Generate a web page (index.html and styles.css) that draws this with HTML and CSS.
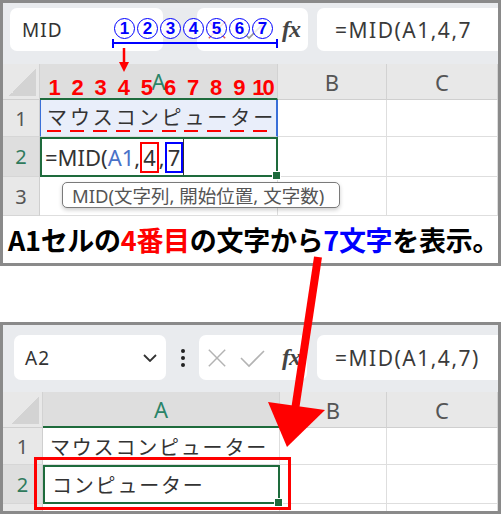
FILE: index.html
```html
<!DOCTYPE html>
<html lang="ja">
<head>
    <meta charset="UTF-8">
    <meta name="viewport" content="width=device-width, initial-scale=1.0">
    <title>MID関数の使い方</title>
    <link rel="stylesheet" href="styles.css">
</head>
<body>
<div class="demo">
    <!-- before: typing the formula -->
    <section class="panel panel-top">
        <div class="toolbar">
            <div class="box namebox">MID</div>
            <div class="bar-gap"></div>
            <div class="box fxbox">
                <svg class="icon-x" width="20" height="20" viewBox="0 0 22 22"><path d="M2 2l18 18M20 2L2 20" stroke="#e06060" stroke-width="1.6"/></svg>
                <svg class="icon-ok" width="26" height="22" viewBox="0 0 26 22"><path d="M2 11l8 8L25 4" stroke="#9a9a9a" stroke-width="1.6" fill="none"/></svg>
                <span class="fx">fx</span>
            </div>
            <div class="box formula">=MID(A1,4,7</div>
        </div>

        <div class="grid">
            <div class="hd corner"></div>
            <div class="hd hd-sel">A</div>
            <div class="hd">B</div>
            <div class="hd">C</div>

            <div class="rh">1</div>
            <div class="cell ref-cell">
                <span class="ch">マ</span><span class="ch">ウ</span><span class="ch">ス</span><span class="ch">コ</span><span class="ch">ン</span><span class="ch">ピ</span><span class="ch">ュ</span><span class="ch">ー</span><span class="ch">タ</span><span class="ch">ー</span>
            </div>
            <div class="cell"></div>
            <div class="cell"></div>

            <div class="rh rh-sel">2</div>
            <div class="cell edit-cell">=MID(<span class="ref">A1</span>,<span class="tag tag-red">4</span>,<span class="tag tag-blue">7</span><span class="caret"></span></div>
            <div class="cell"></div>
            <div class="cell"></div>

            <div class="rh">3</div>
            <div class="cell"></div>
            <div class="cell"></div>
            <div class="cell"></div>
        </div>

        <p class="caption">A1セルの<span class="red">4番目</span>の文字から<span class="blue">7文字</span>を表示。</p>

        <div class="ruler">
            <span>1</span><span>2</span><span>3</span><span>4</span><span>5</span><span>6</span><span>7</span><span>8</span><span>9</span><span class="two">10</span>
        </div>
        <div class="circled">
            <span>1</span><span>2</span><span>3</span><span>4</span><span>5</span><span>6</span><span>7</span>
        </div>
        <svg class="bracket" width="300" height="80" viewBox="0 0 300 80">
            <path d="M109 40H275M110 36V45M274 36V45" stroke="#0000ff" stroke-width="2" fill="none"/>
            <path d="M121 45V61" stroke="#ff0000" stroke-width="2.5"/>
            <polygon points="116,59 126,59 121,69" fill="#ff0000"/>
        </svg>
        <div class="tooltip">MID(文字列, 開始位置, 文字数)</div>
    </section>

    <!-- after: result in A2 -->
    <section class="panel panel-bottom">
        <div class="toolbar">
            <div class="box namebox">A2
                <svg class="chev" width="14" height="8" viewBox="0 0 14 8"><path d="M1 1l6 6 6-6" stroke="#333" stroke-width="1.8" fill="none"/></svg>
            </div>
            <div class="dots"><i></i><i></i><i></i></div>
            <div class="box fxbox">
                <svg class="icon-x" width="20" height="20" viewBox="0 0 22 22"><path d="M2 2l18 18M20 2L2 20" stroke="#b3b3b3" stroke-width="1.6"/></svg>
                <svg class="icon-ok" width="26" height="22" viewBox="0 0 26 22"><path d="M2 11l8 8L25 4" stroke="#b3b3b3" stroke-width="1.6" fill="none"/></svg>
                <span class="fx">fx</span>
            </div>
            <div class="box formula">=MID(A1,4,7)</div>
        </div>

        <div class="grid">
            <div class="hd corner"></div>
            <div class="hd hd-sel">A</div>
            <div class="hd">B</div>
            <div class="hd">C</div>

            <div class="rh">1</div>
            <div class="cell text-cell">マウスコンピューター</div>
            <div class="cell"></div>
            <div class="cell"></div>

            <div class="rh rh-sel">2</div>
            <div class="cell edit-cell text-cell">コンピューター</div>
            <div class="cell"></div>
            <div class="cell"></div>

            <div class="rh"></div>
            <div class="cell"></div>
            <div class="cell"></div>
            <div class="cell"></div>
        </div>

        <div class="result-box"></div>
    </section>

    <svg class="big-arrow" width="501" height="514" viewBox="0 0 501 514">
        <path d="M318 257L295 410" stroke="#ff0000" stroke-width="8"/>
        <polygon points="268,402 325,410 287,447" fill="#ff0000"/>
    </svg>
</div>
</body>
</html>
```

FILE: styles.css
```css
* {
    margin: 0;
    padding: 0;
    box-sizing: border-box;
}
body {
    width: 501px;
    height: 514px;
    overflow: hidden;
    background: #fff;
    font-family: 'Noto Sans', 'Noto Sans CJK JP', sans-serif;
    color: #333;
}
.demo {
    position: relative;
    width: 501px;
    height: 514px;
}
.panel {
    position: relative;
    border: 3px solid #8a8a8a;
    background: #fff;
    overflow: hidden;
}
.panel-top {
    height: 266px;
}
.panel-bottom {
    margin-top: 56px;
    height: 192px;
}

/* formula bar */
.toolbar {
    display: flex;
    align-items: flex-start;
    background: #e9ebee;
}
.toolbar > * {
    flex-shrink: 0;
}
.panel-top .toolbar {
    height: 61px;
    padding: 5px 0 0 7px;
}
.panel-bottom .toolbar {
    height: 67px;
    padding: 10px 0 0 11px;
}
.box {
    display: flex;
    align-items: center;
    height: 43px;
    background: #fff;
    border-radius: 7px;
}
.panel-bottom .box {
    height: 45px;
}
.namebox {
    width: 153px;
    padding-left: 12px;
    font-size: 19px;
    letter-spacing: 1px;
}
.panel-bottom .namebox {
    width: 152px;
    padding: 0 9px 0 11px;
    justify-content: space-between;
}
.bar-gap {
    width: 34px;
}
.dots {
    width: 33px;
    height: 45px;
    display: flex;
    flex-direction: column;
    align-items: center;
    justify-content: center;
    gap: 3px;
}
.dots i {
    width: 4px;
    height: 4px;
    border-radius: 50%;
    background: #222;
}
.fxbox {
    width: 111px;
    padding-left: 10px;
}
.panel-bottom .fxbox {
    width: 108px;
    padding-left: 8px;
}
.icon-ok {
    margin-left: 12px;
}
.fx {
    margin-left: 17px;
    font-family: 'Liberation Serif', serif;
    font-style: italic;
    font-weight: 700;
    font-size: 24px;
    color: #444;
    letter-spacing: -1px;
}
.formula {
    width: 200px;
    margin-left: 9px;
    padding-left: 18px;
    font-size: 21px;
    letter-spacing: 1.5px;
    color: #3a3a3a;
}
.panel-bottom .formula {
    margin-left: 10px;
}

/* sheet grid */
.grid {
    display: grid;
}
.panel-top .grid {
    grid-template-columns: 37px 238px 109px 1fr;
    grid-template-rows: 36px 37px 40px 39px;
}
.panel-bottom .grid {
    grid-template-columns: 40px 237px 107px 1fr;
    grid-template-rows: 36px 37px 39px 20px;
}
.hd {
    display: flex;
    align-items: center;
    justify-content: center;
    background: #e8e8e8;
    border-right: 1px solid #d2d2d2;
    border-bottom: 1px solid #cfcfcf;
    font-size: 22px;
    color: #555;
}
.corner {
    background: #e8e8e8 linear-gradient(135deg, transparent 50%, #d3d3d3 50%) no-repeat right 3px bottom 3px / 27px 27px;
}
.hd-sel {
    background: #dedede;
    border-bottom: 2px solid #1e6b3c;
    color: #2a8468;
}
.rh {
    display: flex;
    align-items: center;
    justify-content: center;
    background: #e8e8e8;
    border-right: 1px solid #cfcfcf;
    border-bottom: 1px solid #d6d6d6;
    font-size: 20px;
    color: #555;
}
.rh-sel {
    background: #dedede;
    color: #2f7a5c;
}
.cell {
    display: flex;
    align-items: center;
    border-right: 1px solid #dedede;
    border-bottom: 1px solid #dedede;
    white-space: nowrap;
}
.ref-cell {
    padding-left: 6px;
    background: #e9eefa;
    border-right: 2px solid #3a6fd8;
    border-left: 1px solid #3a6fd8;
    font-family: 'Noto Sans CJK JP', sans-serif;
    font-size: 20px;
    color: #333;
}
.ch {
    display: inline-block;
    width: 23.5px;
    line-height: 24px;
    padding-bottom: 3px;
    background: linear-gradient(#ff0000, #ff0000) no-repeat left 0 bottom 0 / 14px 2px;
}
.edit-cell {
    position: relative;
    border: 2px solid #1e6b3c;
    padding-left: 3px;
    font-size: 22px;
    color: #333;
}
.edit-cell::after {
    content: '';
    position: absolute;
    right: -5px;
    bottom: -5px;
    width: 7px;
    height: 7px;
    background: #1e6b3c;
    border: 1px solid #fff;
}
.ref {
    color: #4a72c8;
}
.tag {
    display: inline-block;
    line-height: 27px;
    padding: 0 1px;
    border: 2px solid;
}
.tag-red {
    border-color: #ff0000;
}
.tag-blue {
    border-color: #0000ff;
}
.caret {
    display: inline-block;
    width: 1px;
    height: 36px;
    background: #333;
}
.text-cell {
    padding-left: 7px;
    font-family: 'Noto Sans CJK JP', sans-serif;
    font-size: 20px;
    letter-spacing: 1.8px;
    color: #333;
}
.panel-bottom .edit-cell {
    padding-left: 7px;
    font-size: 20px;
}

/* caption under the sheet */
.caption {
    height: 47px;
    display: flex;
    align-items: center;
    padding-left: 5px;
    font-family: 'Noto Sans CJK JP', sans-serif;
    font-weight: 700;
    font-size: 27px;
    color: #000;
    white-space: nowrap;
    letter-spacing: -0.3px;
}
.red {
    color: #ff0000;
}
.blue {
    color: #0000ff;
}

/* annotations */
.ruler {
    position: absolute;
    left: 40px;
    top: 73px;
    display: flex;
}
.ruler span {
    width: 23.1px;
    text-align: center;
    font-family: 'Liberation Sans', sans-serif;
    font-weight: 700;
    font-size: 22px;
    line-height: 24px;
    color: #ff0000;
}
.ruler .two {
    letter-spacing: -2px;
}
.circled {
    position: absolute;
    left: 111px;
    top: 15px;
    display: flex;
    gap: 2px;
}
.circled span {
    width: 21px;
    height: 21px;
    display: flex;
    align-items: center;
    justify-content: center;
    border: 1.5px solid #0000ff;
    border-radius: 50%;
    background: rgba(255, 255, 255, 0.8);
    font-family: 'Liberation Sans', sans-serif;
    font-weight: 700;
    font-size: 17px;
    color: #0000ff;
}
.bracket {
    position: absolute;
    left: 0;
    top: 0;
}
.tooltip {
    position: absolute;
    left: 59px;
    top: 179px;
    width: 278px;
    height: 26px;
    padding-left: 9px;
    display: flex;
    align-items: center;
    background: #fff;
    border: 1.5px solid #7a7a7a;
    border-radius: 5px;
    box-shadow: 0 2px 4px rgba(0, 0, 0, 0.2);
    font-size: 18.5px;
    color: #555;
    white-space: nowrap;
}
.result-box {
    position: absolute;
    left: 31px;
    top: 132px;
    width: 257px;
    height: 53px;
    border: 3px solid #ff0000;
}
.big-arrow {
    position: absolute;
    left: 0;
    top: 0;
    pointer-events: none;
}
```
